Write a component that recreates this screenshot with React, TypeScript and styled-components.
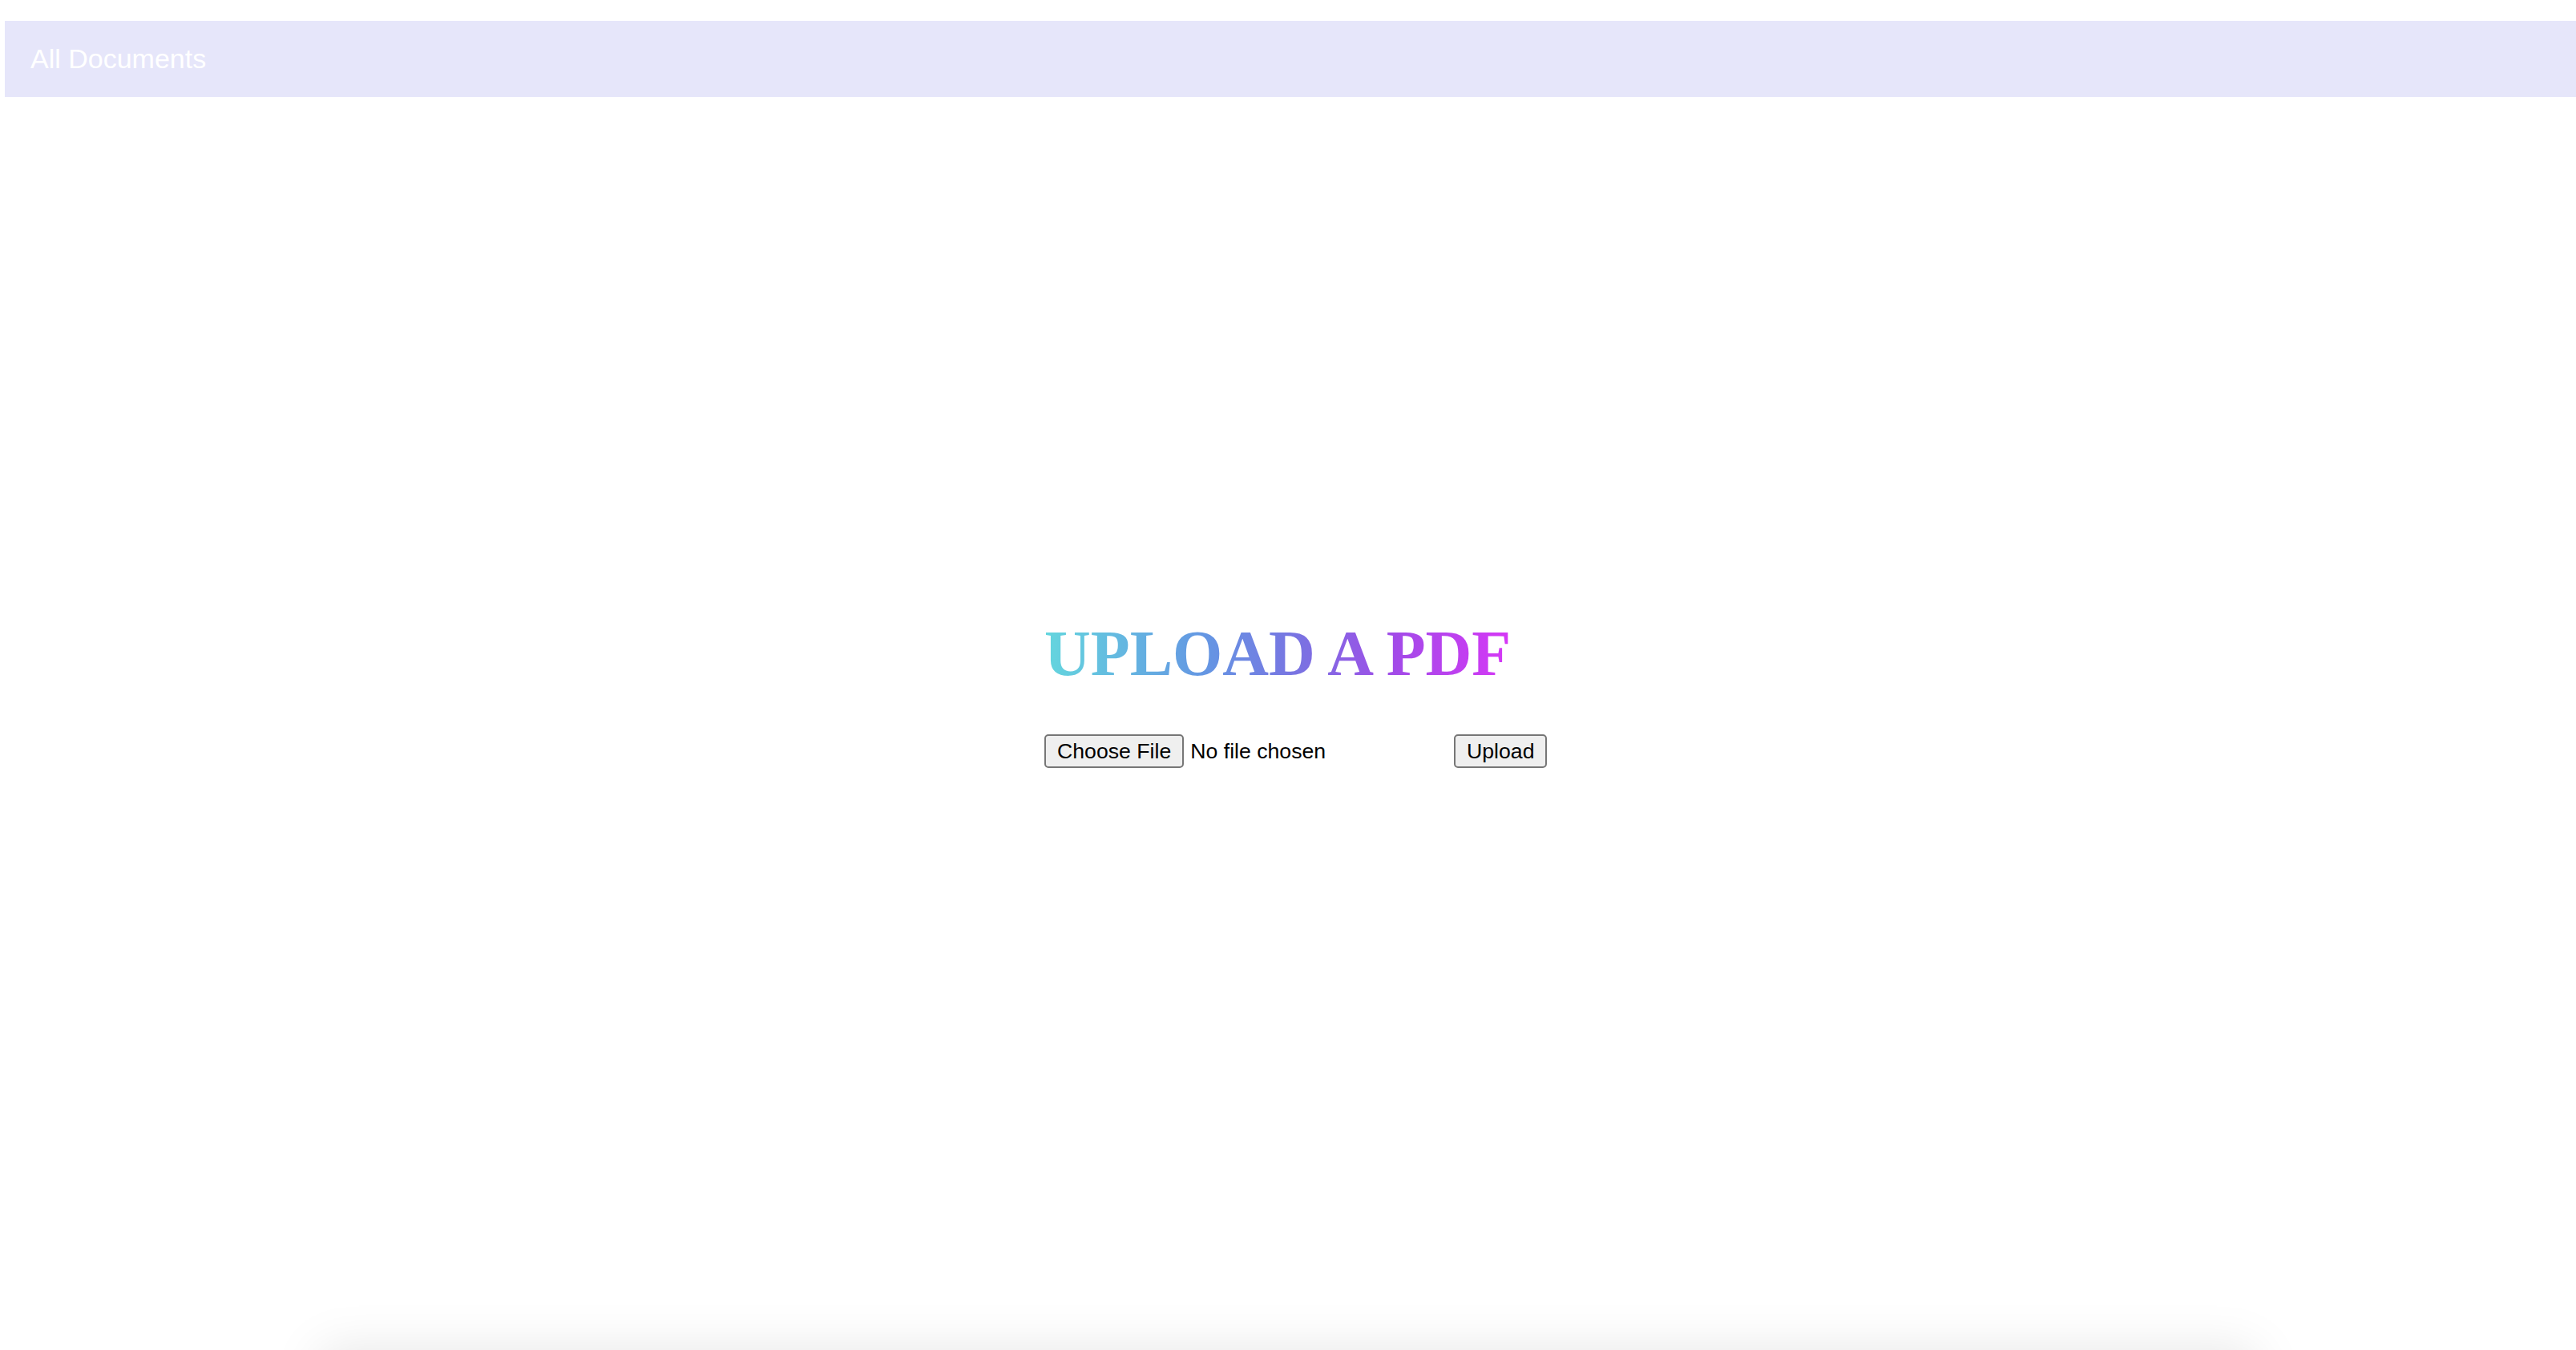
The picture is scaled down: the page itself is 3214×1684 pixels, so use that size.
import React from "react";
import styled, { createGlobalStyle } from "styled-components";

const GlobalStyle = createGlobalStyle`
  html, body {
    margin: 0;
    padding: 0;
    background: #ffffff;
    overflow: hidden;
  }
  body {
    font-family: "Liberation Sans", Arial, sans-serif;
    color: #000;
  }
`;

const Page = styled.div`
  display: flex;
  flex-direction: column;
  height: 100vh;
  overflow: hidden;
`;

const Header = styled.header`
  display: flex;
  flex-shrink: 0;
  align-items: center;
  height: 95px;
  margin: 26px 0 0 6px;
  padding-left: 32px;
  background: #e6e6fa;
`;

const HeaderLink = styled.a`
  font-family: "Liberation Sans", Arial, sans-serif;
  font-size: 34px;
  color: #ffffff;
  text-decoration: none;
`;

const Main = styled.main`
  display: flex;
  flex-shrink: 0;
  flex-direction: column;
  align-items: center;
  padding-top: 648px;
`;

const UploadBlock = styled.section`
  display: flex;
  flex-direction: column;
  align-items: flex-start;
  width: 608px;
`;

const Title = styled.h1`
  display: inline-block;
  margin: 0;
  font-family: "Liberation Serif", "Times New Roman", serif;
  font-weight: 700;
  font-size: 80px;
  line-height: 92px;
  background: linear-gradient(
    to right,
    #64d6de 0%,
    #6497e3 34%,
    #7a72e2 55%,
    #a24be8 75%,
    #d637f6 100%
  );
  -webkit-background-clip: text;
  background-clip: text;
  color: transparent;
  -webkit-text-fill-color: transparent;
`;

const Form = styled.form`
  display: flex;
  align-items: center;
  gap: 8px;
  margin-top: 55px;
`;

const FileInput = styled.input`
  width: 503px;
  height: 42px;
  font-family: "Liberation Sans", Arial, sans-serif;
  font-size: 26.67px;
  color: #000;

  &::file-selector-button {
    height: 42px;
    margin-right: 8px;
    padding: 0 14px;
    font-family: "Liberation Sans", Arial, sans-serif;
    font-size: 26.67px;
    color: #000;
    background: #efefef;
    border: 2px solid #767676;
    border-radius: 5px;
  }
`;

const Button = styled.button`
  height: 42px;
  padding: 0 14px;
  font-family: "Liberation Sans", Arial, sans-serif;
  font-size: 26.67px;
  color: #000;
  background: #efefef;
  border: 2px solid #767676;
  border-radius: 5px;
`;

const Card = styled.div`
  flex-shrink: 0;
  width: 2414px;
  height: 400px;
  margin: 726px auto 0;
  background: #ffffff;
  box-shadow: 0 0 60px rgba(0, 0, 0, 0.1);
`;

export default function App() {
  return (
    <>
      <GlobalStyle />
      <Page>
        <Header>
          <HeaderLink href="#">All Documents</HeaderLink>
        </Header>
        <Main>
          <UploadBlock>
            <Title>UPLOAD A PDF</Title>
            <Form onSubmit={(e) => e.preventDefault()}>
              <FileInput type="file" accept="application/pdf" />
              <Button type="submit">Upload</Button>
            </Form>
          </UploadBlock>
        </Main>
        <Card />
      </Page>
    </>
  );
}
